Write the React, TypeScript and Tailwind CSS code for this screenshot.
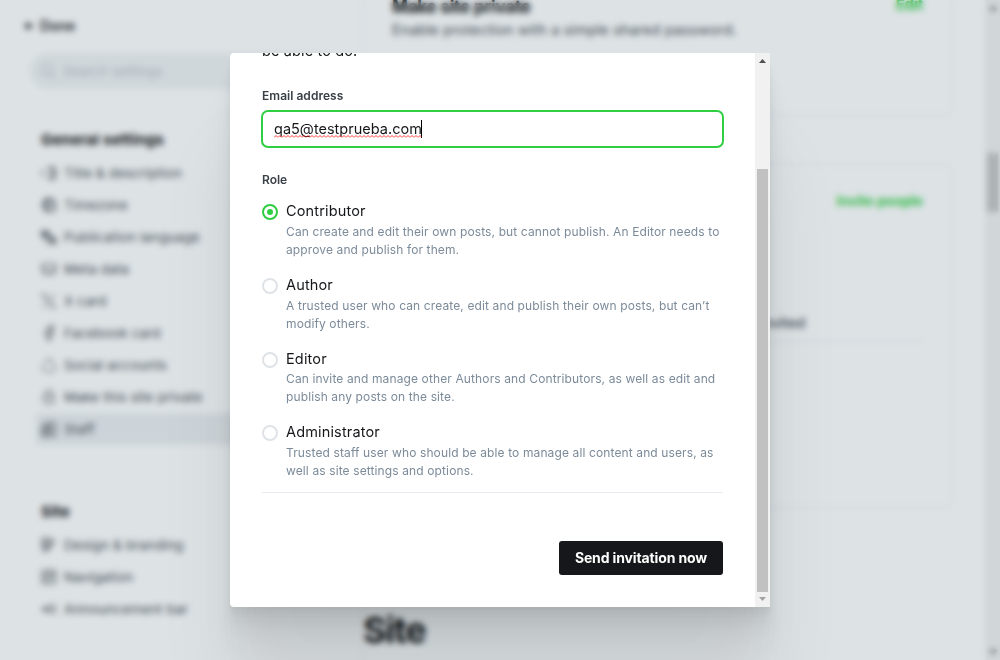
import type { ReactNode } from 'react';

type Item = { label: string; icon: ReactNode; active?: boolean };

function Icon({ children }: { children: ReactNode }) {
  return (
    <svg viewBox="0 0 24 24" className="size-4 shrink-0" fill="none" stroke="#2b3137" strokeWidth="1.6" strokeLinecap="round" strokeLinejoin="round">
      {children}
    </svg>
  );
}

const general: Item[] = [
  { label: 'Title & description', icon: <><path d="M4 8 1 12l3 4M10 4h3M10 20h3M13 3h6a3 3 0 0 1 3 3v12a3 3 0 0 1-3 3h-6M15 3v18M18 8v8" /></> },
  { label: 'Timezone', icon: <><path d="M22 11A10 10 0 1 0 11 22M2 12h8M5 5c4 2 8 2 12 0M10 2c-4 6-4 14 0 20" /><circle cx="16.5" cy="16.5" r="6" /><path d="M16.5 13.5v3h3" /></> },
  { label: 'Publication language', icon: <><path d="M1 3h10v9H1zM3 6h6M6 4v2c0 2-1 4-3 4M5 8l4 2M11 7l7 5M13 13h9v9h-9zM15 20l2.5-5 2.5 5M6 15l4 4" /></> },
  { label: 'Meta data', icon: <><path d="M4 4h16a2 2 0 0 1 2 2v9l-3 5H5l-3-5V6a2 2 0 0 1 2-2ZM3 12h5l2 3h4l2-3h5" /></> },
  { label: 'X card', icon: <path d="M1 2h6l15 20h-6ZM22 2l-9 9M10 14l-8 8" strokeWidth="1.3" /> },
  { label: 'Facebook card', icon: <path d="M10 23v-9H6v-4h4V7c0-4 2-6 5-6h4v4h-3c-1.5 0-2 .5-2 2v3h5l-1 4h-4v9Z" /> },
  { label: 'Social accounts', icon: <path d="M7 9a5 5 0 1 1 9 1 6 6 0 1 1-1 12H7A6 6 0 0 1 5 11" strokeWidth="1.3" /> },
  { label: 'Make this site private', icon: <><path d="M4 10h16v9a3 3 0 0 1-3 3H7a3 3 0 0 1-3-3ZM7 10V6a5 5 0 0 1 10 0v4" strokeWidth="1.4" /><circle cx="12" cy="16" r="1" /></> },
  { label: 'Staff', active: true, icon: <><path d="M2 22V10a8 8 0 0 1 8-8h8a4 4 0 0 1 4 4v16ZM4 9h6l4-5M14 22v-7l4-4" /><circle cx="11" cy="11" r="3" /><path d="M2 14h7v8H2z" /></> },
];

const site: Item[] = [
  { label: 'Design & branding', icon: <><path d="M2 2h10v14a5 5 0 0 1-10 0ZM2 7h10M2 12h10M13 6l6-2v6l-6 5" /><circle cx="7" cy="17" r="1.5" /></> },
  { label: 'Navigation', icon: <path d="M2 2h20v20H2zM10 2v20M2 9h20M2 15h20M14 6h5" strokeWidth="1.4" /> },
  { label: 'Announcement bar', icon: <path d="M1 12h3l11-6v12L4 12M5 9v7M21 5v14" /> },
];

function NavGroup({ title, items }: { title: string; items: Item[] }) {
  return (
    <section className="flex flex-col">
      <h2 className="mb-[7px] pl-[5px] text-[15px] leading-5 font-bold tracking-[0.2px] text-black">{title}</h2>
      {items.map((item) => (
        <div key={item.label} className={item.active ? 'flex h-8 items-center gap-[7px] rounded bg-[#ebeef0] pl-[5px]' : 'flex h-8 items-center gap-[7px] pl-[5px]'}>
          <Icon>{item.icon}</Icon>
          <span className="text-[13.5px] leading-5 tracking-[0.13px] whitespace-nowrap text-[#394047]">{item.label}</span>
        </div>
      ))}
    </section>
  );
}

function SettingsPage() {
  return (
    <div className="flex h-full bg-white">
      <aside className="w-[364px] shrink-0 border-r border-[#f0f2f3]">
        <div className="flex h-[53px] items-start pt-4 pl-6">
          <div className="flex h-5 items-center text-sm font-semibold tracking-[-0.1px] text-[#15171a]">
            <svg viewBox="0 0 12 12" className="mr-[6px] size-[10px]" fill="none" stroke="currentColor" strokeWidth="2.4"><path d="M11 6H2M6 2 2 6l4 4" /></svg>
            Done
          </div>
        </div>
        <div className="mr-6 ml-[30px] flex h-9 items-center gap-[7px] rounded-full bg-[#eff2f3] pl-2.5">
          <svg viewBox="0 0 24 24" className="size-4" fill="none" stroke="#b4bbc0" strokeWidth="2"><circle cx="10" cy="10" r="8" /><path d="m16 16 7 7" /></svg>
          <span className="text-[13.5px] leading-5 tracking-[0.06px] text-[#b4bdc3]">Search settings</span>
        </div>
        <nav className="flex flex-col gap-[57px] pt-[41px] pr-6 pl-9">
          <NavGroup title="General settings" items={general} />
          <NavGroup title="Site" items={site} />
        </nav>
      </aside>
      <main className="flex min-w-0 flex-1 flex-col overflow-hidden pr-[33px]">
        <section className="-mt-2.5 flex h-[126px] shrink-0 justify-between rounded-lg border border-t-0 border-l-0 border-[#eceff1] pr-7 pl-[28px]">
          <div className="pt-[5px]">
            <h3 className="text-[17px] leading-6 font-bold tracking-[-0.2px] text-black">Make site private</h3>
            <p className="mt-px text-[14.5px] leading-5 tracking-[0.1px] text-[#394047]">Enable protection with a simple shared password.</p>
          </div>
          <span className="pt-[5px] text-[15px] leading-5 font-bold tracking-[-0.2px] text-[#30cf43]">Edit</span>
        </section>
        <section className="mt-[48px] flex h-[344px] shrink-0 flex-col rounded-lg border border-l-0 border-[#eceff1] pr-7 pl-[28px]">
          <div className="flex justify-end pt-[26px]">
            <span className="text-sm leading-5 font-bold tracking-[-0.12px] text-[#30cf43]">Invite people</span>
          </div>
          <div className="mt-[102px] flex h-[29px] border-b border-[#e6e9ec]">
            <span className="ml-[368px] text-sm leading-5 font-medium text-[#394047]">Invited</span>
          </div>
        </section>
        <h2 className="mt-[100px] -ml-px text-[36px] leading-[44px] font-bold tracking-[-1.3px] text-black">Site</h2>
      </main>
      <div className="flex w-[15px] shrink-0 flex-col items-center bg-[#f0f0f0]">
        <svg viewBox="0 0 8 4" className="mt-1.5 h-1 w-2 fill-[#505050]"><path d="M4 0 8 4H0Z" /></svg>
        <div className="mt-[143px] h-[59px] w-[11px] bg-[#c1c1c1]" />
        <svg viewBox="0 0 8 4" className="mt-auto mb-1.5 h-1 w-2 fill-[#505050]"><path d="M4 4 8 0H0Z" /></svg>
      </div>
    </div>
  );
}

const roles = [
  { name: 'Contributor', lines: ['Can create and edit their own posts, but cannot publish. An Editor needs to', 'approve and publish for them.'] },
  { name: 'Author', lines: ['A trusted user who can create, edit and publish their own posts, but can’t', 'modify others.'] },
  { name: 'Editor', lines: ['Can invite and manage other Authors and Contributors, as well as edit and', 'publish any posts on the site.'] },
  { name: 'Administrator', lines: ['Trusted staff user who should be able to manage all content and users, as', 'well as site settings and options.'] },
];

function InviteModal() {
  return (
    <div className="flex h-[554px] w-[540px] overflow-hidden rounded-l bg-white shadow-[0_2.8px_2.2px_rgba(0,0,0,0.02),0_6.7px_5.3px_rgba(0,0,0,0.028),0_12.5px_10px_rgba(0,0,0,0.035),0_22.3px_17.9px_rgba(0,0,0,0.042),0_41.8px_33.4px_rgba(0,0,0,0.05),0_100px_80px_rgba(0,0,0,0.07)]">
      <div className="flex flex-1 flex-col px-8">
        <p className="-mt-[13px] h-[22px] text-[14.5px] leading-[22px] tracking-[0.13px] text-[#15171a]">be able to do.</p>
        <label className="mt-[25px] text-xs leading-[18px] font-semibold tracking-[0.03px] text-[#394047]">Email address</label>
        <div className="-mx-px mt-[5px] flex h-[38px] shrink-0 items-center rounded-[7px] border-2 border-[#30cf43] pl-[11px]">
          <span className="relative text-[14.5px] leading-5 tracking-[0.01px] text-[#15171a]">
            qa5@testprueba.com
            <svg className="absolute top-[16px] left-0 h-[3px] w-full" fill="none" stroke="#ff2020" strokeWidth="0.9">
              <defs><pattern id="wave" width="4" height="3" patternUnits="userSpaceOnUse"><path d="M0 2.5 2 .5 4 2.5" /></pattern></defs>
              <rect width="100%" height="3" fill="url(#wave)" stroke="none" />
            </svg>
          </span>
          <span className="-ml-px h-[18px] w-px bg-black" />
        </div>
        <div className="mt-[23px] text-xs leading-[18px] font-semibold text-[#394047]">Role</div>
        <div className="mt-3 flex flex-col gap-[15.76px]">
          {roles.map((role, i) => (
            <div key={role.name} className="flex h-[58px] gap-2">
              <span className={i === 0 ? 'mt-[3px] flex size-4 shrink-0 items-center justify-center rounded-full border-2 border-[#30cf43]' : 'mt-[3px] size-4 shrink-0 rounded-full border-2 border-[#dfe3e8]'}>
                {i === 0 && <span className="size-1.5 rounded-full bg-[#30cf43]" />}
              </span>
              <div>
                <div className="text-[14.5px] leading-5 tracking-[0.15px] text-[#15171a]">{role.name}</div>
                <p className="mt-[1.8px] text-xs leading-[18px] tracking-[0.12px] whitespace-nowrap text-[#7c8b9a]">
                  {role.lines[0]}<br />{role.lines[1]}
                </p>
              </div>
            </div>
          ))}
        </div>
        <div className="mt-[11.72px] h-px shrink-0 bg-[#e8ecf0]" />
        <button className="mt-[48px] h-[34px] w-[164px] shrink-0 self-end rounded-[3px] bg-[#15171a] text-sm font-bold tracking-[-0.13px] whitespace-nowrap text-white">Send invitation now</button>
      </div>
      <div className="flex w-[15px] flex-col items-center bg-[#f1f1f1]">
        <svg viewBox="0 0 7 4" className="mt-1.5 h-1 w-[7px] fill-[#505050]"><path d="M3.5 0 7 4H0Z" /></svg>
        <div className="mt-[106px] h-[423px] w-[11px] bg-[#c1c1c1]" />
        <svg viewBox="0 0 7 4" className="mt-auto mb-1.5 h-1 w-[7px] fill-[#a3a3a3]"><path d="M3.5 4 7 0H0Z" /></svg>
      </div>
    </div>
  );
}

export default function App() {
  return (
    <div className="relative h-[660px] w-[1000px] overflow-hidden font-['Inter',sans-serif]">
      <SettingsPage />
      <div className="absolute inset-0 flex items-center justify-center bg-[rgba(85,110,125,0.2)] backdrop-blur-[3px]">
        <InviteModal />
      </div>
    </div>
  );
}
